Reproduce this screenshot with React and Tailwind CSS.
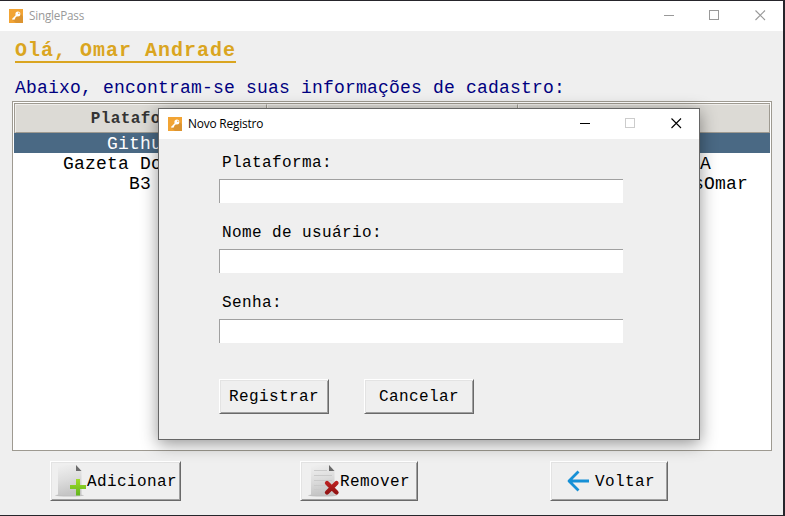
import React from "react";

function KeyIcon() {
  return (
    <svg className="h-3.5 w-3.5 shrink-0" viewBox="0 0 14 14">
      <rect width="14" height="14" fill="#f2a434" />
      <path d="M11 4 14 7.500V14H7l-3.500-3z" fill="#dc9430" />
      <circle cx="8.900" cy="5" r="2.500" fill="#fff" />
      <path d="M7.500 6.500 3.500 10.500M4.800 9.300l1 1" stroke="#fff" strokeWidth="1.600" fill="none" />
      <circle cx="9.800" cy="4.200" r=".7" fill="#f2a434" />
    </svg>
  );
}

function Controls({ main }) {
  const c = main ? "#999999" : "#000000";
  return (
    <div className="ml-auto flex h-[30px] w-[137px]">
      <svg className="h-[30px] w-[137px] shrink-0" viewBox="0 0 137 30" fill="none" shapeRendering="crispEdges">
        <path d="M18 14.5h10" stroke={c} />
        <rect x="63.5" y="9.5" width="9" height="9" stroke={main ? c : "#cccccc"} />
        <path d="m109.5 9.5 9.5 9.5m0-9.5-9.5 9.5" stroke={c} shapeRendering="auto" strokeWidth="1.1" />
      </svg>
    </div>
  );
}

function Button({ className, children }) {
  return (
    <button
      className={
        "flex items-center whitespace-pre border border-t-white border-l-white border-r-[#696969] border-b-[#696969] bg-[#efefef] text-[16px] tracking-[0.4px] text-black shadow-[inset_1px_1px_0_#e3e3e3,inset_-1px_-1px_0_#a0a0a0] " +
        className
      }
    >
      {children}
    </button>
  );
}

function PageIcon({ remove }) {
  const id = remove ? "sheetRemove" : "sheetAdd";
  return (
    <svg className="h-9 w-8 shrink-0" viewBox="0 0 32 36">
      <defs>
        <linearGradient id={id} x1="0" y1="0" x2="0.2" y2="1">
          <stop offset="0" stopColor="#f0f0f0" />
          <stop offset="0.5" stopColor="#dedede" />
          <stop offset="1" stopColor="#c6c6c6" />
        </linearGradient>
        <linearGradient id={id + "Mark"} x1="0" y1="0" x2="0" y2="1">
          <stop offset="0" stopColor={remove ? "#b92020" : "#a0dc28"} />
          <stop offset="1" stopColor={remove ? "#941414" : "#62b41e"} />
        </linearGradient>
      </defs>
      <ellipse cx="14.500" cy="32.300" rx="14.500" ry="1.200" fill="#b5b5b5" opacity=".8" />
      <path d="M3 2h18l5.500 6v24H3z" fill={"url(#" + id + ")"} />
      <path d="M21 2 26.500 8H21z" fill="#6b6b6b" />
      {remove && <path d="M6 7.500h13M6 12.500h18M6 17.500h18M6 22.500h12M6 26.500h7" stroke="#cacaca" />}
      {remove ? (
        <path d="m19 20 9.500 9.500m0-9.500-9.500 9.500" stroke={"url(#" + id + "Mark)"} strokeWidth="4.300" strokeLinecap="round" />
      ) : (
        <path d="M21 16h4v6h6v4h-6v6.500h-4V26h-6v-4h6z" fill={"url(#" + id + "Mark)"} />
      )}
    </svg>
  );
}

function Field({ label }) {
  return (
    <label className="flex h-[70px] flex-col">
      <span className="h-[25px] pl-[3px] text-[16px] leading-[18px] tracking-[0.4px] text-black">{label}</span>
      <input className="h-6 w-[404px] border-t border-l border-[#a0a0a0] bg-white px-1 outline-none" />
    </label>
  );
}

function HeadCell({ children }) {
  return (
    <div className="flex-1 border border-t-[#efedea] border-l-[#efedea] border-r-[#9e9a91] border-b-[#9e9a91] bg-[#dcdad5] text-center text-[16px] leading-[28px] font-bold tracking-[0.4px] text-[#333]">
      {children}
    </div>
  );
}

function Row({ name, tail, tailPad, selected }) {
  return (
    <div
      className={
        "flex h-5 text-[18px] leading-[22px] tracking-[0.2px] whitespace-pre " +
        (selected ? "bg-[#4a6984] text-white" : "text-black")
      }
    >
      <div className="w-[252px] text-center">{name}</div>
      <div className="flex-1" />
      <div className={"w-[252px] text-right " + tailPad}>{tail}</div>
    </div>
  );
}

export default function App() {
  return (
    <div className="relative h-[516px] w-[785px] overflow-hidden bg-[#26252b] pt-px font-['Courier_New','Liberation_Mono',monospace]">
      <div className="flex h-[514px] w-[783px] flex-col bg-[#efefef]">
        <header className="flex h-[30px] shrink-0 items-center bg-white pl-[9px] font-['Open_Sans',sans-serif]">
          <KeyIcon />
          <span className="ml-1.5 text-[11.7px] tracking-[-0.2px] text-[#999]">SinglePass</span>
          <Controls main />
        </header>

        <h1 className="mt-[7px] ml-[15px] h-[25px] w-[221px] shrink-0 border-b-2 border-[#daa520] text-[20px] leading-[25px] font-bold tracking-[1px] whitespace-nowrap text-[#daa520]">
          Olá, Omar Andrade
        </h1>
        <p className="mt-[14px] ml-[15px] h-[24px] shrink-0 text-[18px] leading-[22px] tracking-[0.2px] whitespace-nowrap text-[#000080]">
          Abaixo, encontram-se suas informações de cadastro:
        </p>

        <div className="ml-3 h-[350px] w-[760px] shrink-0 border border-[#9e9a91] bg-white p-px">
          <div className="flex h-[30px] border-t border-l border-[#9e9a91]">
            <HeadCell>Plataforma</HeadCell>
            <HeadCell />
            <HeadCell />
          </div>
          <Row name="Github" selected />
          <Row name="Gazeta Do Povo" tail="A" tailPad="pr-[59px]" />
          <Row name="B3" tail="sOmar" tailPad="pr-[22px]" />
        </div>

        <div className="mt-[10px] flex pl-[50px]">
          <Button className="h-10 w-[131px] pl-1">
            <PageIcon />
            <span className="pt-0.5">Adicionar</span>
          </Button>
          <Button className="ml-[119px] h-10 w-[118px] pl-[7px]">
            <PageIcon remove />
            <span className="pt-0.5">Remover</span>
          </Button>
          <Button className="ml-[132px] h-10 w-[118px] pl-4">
            <svg className="mr-[5px] h-[22px] w-[23px] shrink-0" viewBox="0 0 23 22" fill="none" stroke="#1690d6" strokeWidth="2.8" strokeLinejoin="round">
              <path d="M11.500 1.500 2 11l9.500 9.500M2 11h20" />
            </svg>
            <span className="pt-0.5">Voltar</span>
          </Button>
        </div>
      </div>

      <section className="absolute top-[108px] left-[158px] flex h-[332px] w-[542px] flex-col border border-[#666] bg-[#efefef] shadow-[0_4px_16px_rgba(0,0,0,0.42)]">
        <header className="flex h-[30px] shrink-0 items-center bg-white pl-[9px] font-['Open_Sans',sans-serif]">
          <KeyIcon />
          <span className="ml-1.5 text-[11.9px] tracking-[-0.2px] text-black">Novo Registro</span>
          <Controls />
        </header>
        <div className="flex flex-col pt-[15px] pl-[60px]">
          <Field label="Plataforma:" />
          <Field label="Nome de usuário:" />
          <Field label="Senha:" />
          <div className="mt-[15px] flex gap-[35px]">
            <Button className="h-[35px] w-[110px] pl-[9px]">Registrar</Button>
            <Button className="h-[35px] w-[110px] pl-[14px]">Cancelar</Button>
          </div>
        </div>
      </section>
    </div>
  );
}
